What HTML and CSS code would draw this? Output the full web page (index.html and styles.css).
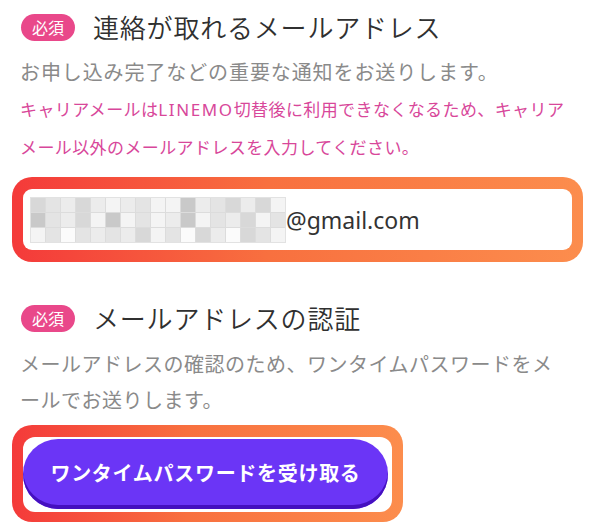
FILE: index.html
```html
<!DOCTYPE html>
<html lang="ja">
<head>
<meta charset="utf-8">
<link rel="stylesheet" href="styles.css">
</head>
<body>
<main class="page">
  <section class="block">
    <h2 class="heading"><span class="badge">必須</span><span class="title">連絡が取れるメールアドレス</span></h2>
    <p class="desc">お申し込み完了などの重要な通知をお送りします。</p>
    <p class="warn">キャリアメールは<span class="latin">LINEMO</span>切替後に利用できなくなるため、キャリア<br>メール以外のメールアドレスを入力してください。</p>
    <div class="frame frame-input">
      <div class="input">
        <div class="mosaic">
          <i class="g2"></i><i class="g3"></i><i class="g4"></i><i class="g2"></i><i class="g4"></i><i class="g5"></i><i class="g4"></i><i class="g3"></i><i class="g5"></i><i class="g5"></i><i class="g1"></i><i class="g4"></i><i class="g3"></i><i class="g2"></i><i class="g4"></i><i class="g2"></i><i class="g5"></i>
          <i class="g1"></i><i class="g3"></i><i class="g4"></i><i class="g2"></i><i class="g5"></i><i class="g1"></i><i class="g5"></i><i class="g3"></i><i class="g5"></i><i class="g4"></i><i class="g1"></i><i class="g5"></i><i class="g3"></i><i class="g4"></i><i class="g2"></i><i class="g5"></i><i class="g3"></i>
          <i class="g5"></i><i class="g3"></i><i class="g6"></i><i class="g3"></i><i class="g4"></i><i class="g3"></i><i class="g4"></i><i class="g2"></i><i class="g5"></i><i class="g3"></i><i class="g6"></i><i class="g2"></i><i class="g4"></i><i class="g6"></i><i class="g2"></i><i class="g3"></i><i class="g5"></i>
        </div>
        <span class="domain">@gmail.com</span>
      </div>
    </div>
  </section>

  <section class="block block-second">
    <h2 class="heading"><span class="badge">必須</span><span class="title">メールアドレスの認証</span></h2>
    <p class="desc desc-wide">メールアドレスの確認のため、ワンタイムパスワードをメ<br>ールでお送りします。</p>
    <div class="frame frame-button">
      <div class="button-wrap">
        <button class="otp-button" type="button">ワンタイムパスワードを受け取る</button>
      </div>
    </div>
  </section>
</main>
</body>
</html>
```

FILE: styles.css
```css
* { box-sizing: border-box; }

html, body {
  margin: 0;
  padding: 0;
  background: #ffffff;
}

body {
  font-family: "Noto Sans", "Noto Sans CJK JP", sans-serif;
  color: #333333;
}

.page {
  padding: 7px 0 0 0;
  width: 597px;
}

.block {
  display: flex;
  flex-direction: column;
}

.block-second {
  margin-top: 36px;
}

.heading {
  margin: 0;
  padding-left: 21px;
  height: 40px;
  display: flex;
  align-items: center;
  font-weight: 400;
}

.badge {
  width: 54px;
  height: 27px;
  border-radius: 14px;
  background: #e9488a;
  color: #ffffff;
  font-family: "Noto Sans CJK JP", sans-serif;
  font-size: 16px;
  line-height: 27px;
  text-align: center;
  flex: none;
}

.title {
  margin-left: 18px;
  font-family: "Noto Sans CJK JP", sans-serif;
  font-size: 26px;
  font-weight: 350;
  letter-spacing: 0.8px;
  line-height: 40px;
  color: #303030;
  white-space: nowrap;
}

.desc {
  margin: 7px 0 0 0;
  padding-left: 20px;
  font-family: "Noto Sans CJK JP", sans-serif;
  font-size: 20px;
  letter-spacing: 0.9px;
  line-height: 36px;
  color: #8a8a8a;
  white-space: nowrap;
}

.desc-wide {
  margin-top: 8px;
  letter-spacing: 0.5px;
}

.warn {
  margin: 0;
  padding-left: 20px;
  font-family: "Noto Sans CJK JP", sans-serif;
  font-size: 17px;
  letter-spacing: 0.4px;
  line-height: 37px;
  color: #d8479a;
  white-space: nowrap;
}

.latin {
  font-family: "Noto Sans", sans-serif;
  letter-spacing: 1.6px;
}

.frame {
  margin-left: 12px;
  border-radius: 20px;
  background: linear-gradient(90deg, #f43a3a 0%, #f8703f 45%, #fc8d4d 100%);
}

.frame-input {
  margin-top: 12px;
  width: 571px;
  padding: 12px 11px;
}

.input {
  height: 61px;
  background: #ffffff;
  border-radius: 9px;
  display: flex;
  align-items: center;
  padding-left: 7px;
}

.mosaic {
  display: grid;
  grid-template-columns: repeat(17, 14px);
  grid-auto-rows: 14px;
  gap: 1px;
  background: #dcdcdc;
  border: 1px solid #e2e2e2;
}

.mosaic i { display: block; }
.g1 { background: #c9c9c9; }
.g2 { background: #d8d8d8; }
.g3 { background: #e4e4e4; }
.g4 { background: #ececec; }
.g5 { background: #f4f4f4; }
.g6 { background: #fbfbfb; }

.domain {
  margin-left: 0;
  font-family: "Noto Sans", sans-serif;
  font-size: 23px;
  color: #333333;
  line-height: 30px;
}

.frame-button {
  margin-top: 7px;
  width: 391px;
  padding: 12px 11px 10px 11px;
}

.button-wrap {
  background: #ffffff;
  border-radius: 12px;
  height: 75px;
  padding: 2px 4px 3px 0;
}

.otp-button {
  display: block;
  width: 365px;
  height: 70px;
  border: none;
  border-radius: 35px;
  background: #6b35f6;
  box-shadow: inset 0 -4px 0 #4510bf;
  color: #ffffff;
  font-family: "Noto Sans CJK JP", sans-serif;
  font-weight: 700;
  font-size: 20px;
  letter-spacing: 0.7px;
  padding: 0 0 4px 0;
  cursor: pointer;
}
```
